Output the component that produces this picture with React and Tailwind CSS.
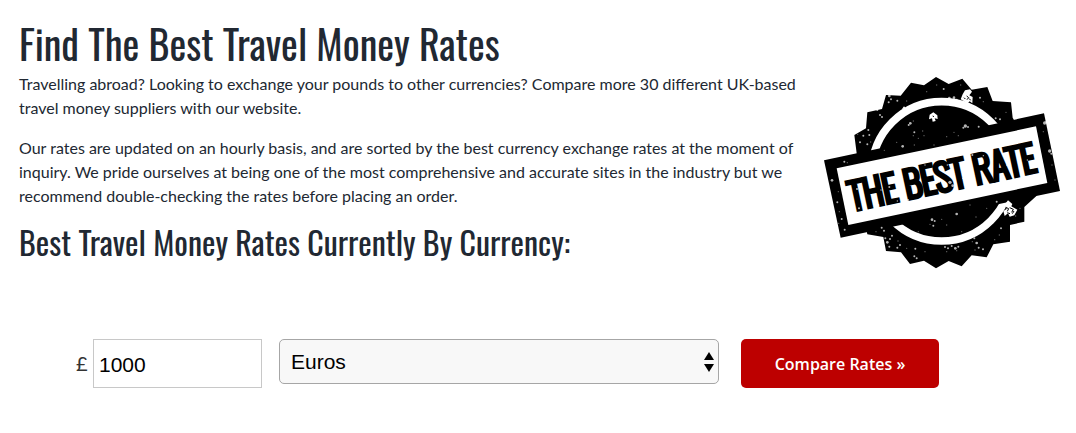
import { useState } from "react";

// white scratches on the stamp: [x, y, radius]
const specks = [
  [238, 93, 4], [243, 103, 3], [236, 112, 3], [262, 107, 3], [290, 108, 2], [202, 135, 3], [210, 150, 3], [216, 156, 3],
  [175, 195, 3], [160, 212, 3], [178, 210, 3], [150, 232, 3], [172, 238, 3], [143, 208, 2], [182, 231, 2],
  [380, 60, 2], [401, 72, 3], [350, 80, 2], [418, 99, 4], [432, 98, 4], [440, 104, 3], [452, 60, 2], [510, 98, 3], [520, 110, 2],
  [557, 160, 3], [570, 163, 3], [588, 142, 2], [301, 175, 4], [296, 180, 3], [310, 168, 2], [313, 202, 3], [338, 198, 2],
  [310, 212, 2], [325, 220, 2], [342, 212, 2], [313, 240, 2], [466, 183, 5], [474, 186, 3], [460, 188, 3], [506, 185, 3],
  [432, 202, 2], [445, 212, 2], [410, 215, 2], [372, 240, 2], [278, 244, 4], [260, 232, 2], [223, 256, 2],
  [103, 290, 3], [112, 293, 2], [66, 346, 4], [82, 412, 3], [88, 440, 2], [95, 462, 3], [86, 475, 2], [104, 494, 3],
  [85, 380, 2], [704, 174, 5], [709, 170, 3], [719, 258, 5], [724, 266, 3], [726, 300, 2], [735, 345, 2], [700, 200, 2],
  [226, 520, 3], [232, 532, 4], [240, 522, 3], [246, 512, 3], [238, 545, 3], [264, 528, 2], [262, 548, 3], [270, 540, 3],
  [222, 497, 3], [215, 488, 3], [198, 500, 2], [290, 550, 2], [316, 551, 3], [313, 574, 3], [320, 580, 3], [345, 560, 2],
  [366, 464, 4], [374, 468, 3], [360, 478, 2], [370, 482, 3], [440, 447, 4], [395, 463, 2], [410, 480, 2], [498, 456, 2],
  [405, 546, 3], [414, 550, 3], [425, 543, 3], [436, 550, 4], [445, 545, 3], [440, 557, 2], [410, 560, 2],
  [493, 520, 3], [500, 534, 4], [506, 548, 3], [487, 530, 2], [519, 553, 3], [495, 555, 2], [554, 524, 2], [573, 490, 3],
  [560, 410, 3], [480, 420, 2], [530, 430, 2], [617, 453, 2], [630, 430, 2], [568, 510, 2], [325, 500, 2], [455, 500, 2],
];

// same thing, but over the lettering
const letterSpecks = [
  [123, 330, 3], [141, 372, 3], [147, 430, 3], [213, 375, 2], [205, 420, 3], [238, 366, 3], [262, 408, 2],
  [294, 405, 3], [345, 300, 2], [365, 352, 2], [412, 300, 2], [420, 352, 5], [428, 362, 4], [388, 350, 3],
  [458, 340, 2], [487, 270, 3], [534, 356, 3], [520, 272, 2], [590, 300, 2], [652, 285, 2], [672, 330, 2],
];

function Stamp() {
  return (
    <svg viewBox="0 0 780 630" className="w-full" role="img" aria-label="The best rate">
      <polygon
        fill="#000"
        points="378,36 416,57 457,41 485,74 532,66 548,108 603,112 608,158 660,250 680,392 643,426 643,470 600,480 600,530 550,538 530,577 485,571 455,604 416,588 378,610 342,587 300,597 273,562 228,558 220,516 172,508 166,480 140,265 133,210 168,190 172,142 216,132 228,90 272,92 303,53 342,61"
      />
      <circle cx="395" cy="319" r="209" fill="none" stroke="#fff" strokeWidth="23" />
      <polygon fill="#000" points="42,286 702,145 750,378 92,518" />
      <polygon fill="#fff" points="80,310 678,184 712,354 115,480" />
      {/* worn patches */}
      <g fill="#fff">
        <path d="M452 103 L458 88 L465 76 L480 73 L486 80 L478 91 L488 96 L487 115 L479 109 L471 117 L461 108 Z" />
        <path d="M357 163 L359 149 L370 142 L382 151 L383 162 L374 160 L377 168 L368 170 L366 160 Z" />
        <path d="M586 416 L594 406 L607 417 L604 424 L622 434 L613 451 L599 455 L594 445 L584 453 L580 438 L590 432 Z" />
        <path d="M276 132 L282 124 L289 131 Z" />
        {specks.map(([x, y, r]) => (
          <circle key={`${x}-${y}`} cx={x} cy={y} r={r} opacity={r < 3 ? 0.4 : 0.7} />
        ))}
      </g>
      <path
        d="M470 93l6 5-5 6 M478 101l4 5 M462 98l4 4 M368 153l4 2 M587 427l9 4-4 8 M599 428l11 5-5 9 M592 443l8 3 M607 446l5-8"
        fill="none"
        stroke="#000"
        strokeWidth="3"
      />
      <g
        transform="translate(145 447) rotate(-12)"
        stroke="#000"
        strokeWidth="12"
        textAnchor="middle"
        className="font-[Oswald,sans-serif] text-[108px] font-extralight"
      >
        <text x="56" y="-13">THE</text>
        <text x="246" y="-13">BEST</text>
        <text x="459" y="-13">RATE</text>
      </g>
      <g fill="#fff">
        {letterSpecks.map(([x, y, r]) => (
          <circle key={`${x}-${y}`} cx={x} cy={y} r={r} opacity="0.7" />
        ))}
      </g>
    </svg>
  );
}

export default function App() {
  const [amount, setAmount] = useState("1000");
  const [currency, setCurrency] = useState("Euros");

  return (
    <div className="bg-white font-[Lato,sans-serif] text-[#212832]">
      <div className="flex items-start pl-[19px] pr-[6px] pt-[19px]">
        <div className="flex-1">
          <h1 className="font-[Oswald,sans-serif] text-[40px] leading-[48px] font-normal">
            Find The Best Travel Money Rates
          </h1>
          <p className="mt-[5px] text-base leading-6">
            Travelling abroad? Looking to exchange your pounds to other currencies? Compare more 30 different UK-based
            travel money suppliers with our website.
          </p>
          <p className="mt-4 text-base leading-6">
            Our rates are updated on an hourly basis, and are sorted by the best currency exchange rates at the moment of
            inquiry. We pride ourselves at being one of the most comprehensive and accurate sites in the industry but we
            recommend double-checking the rates before placing an order.
          </p>
          <h2 className="mt-[15px] font-[Oswald,sans-serif] text-[32px] leading-[38px] font-normal">
            Best Travel Money Rates Currently By Currency:
          </h2>
        </div>
        <div className="mt-[46px] w-[260px] shrink-0">
          <Stamp />
        </div>
      </div>

      <form className="mt-16 flex items-start pl-[76px] pr-[137px]" onSubmit={(e) => e.preventDefault()}>
        <label htmlFor="amount" className="w-[17px] text-xl leading-[49px] text-[#333]">
          £
        </label>
        <input
          id="amount"
          type="text"
          value={amount}
          onChange={(e) => setAmount(e.target.value)}
          className="h-[49px] w-[169px] border border-[#c8c8c8] bg-white px-[5px] pt-[2px] font-['Liberation_Sans',Arial,sans-serif] text-[21px] text-black"
        />
        <div className="relative ml-[17px] flex-1">
          <select
            aria-label="Currency"
            value={currency}
            onChange={(e) => setCurrency(e.target.value)}
            className="block h-[45px] w-full appearance-none rounded-[5px] border border-[#a6a6a6] bg-[#f8f8f8] pl-[11px] font-['Liberation_Sans',Arial,sans-serif] text-[21px] text-black"
          >
            <option>Euros</option>
            <option>US Dollars</option>
          </select>
          <svg viewBox="0 0 10 20" className="pointer-events-none absolute right-[5px] top-[13px] h-5 w-[10px]">
            <path d="M5 0 L10 8 H0 Z M0 12 H10 L5 20 Z" fill="#000" />
          </svg>
        </div>
        <button
          type="submit"
          className="ml-[22px] h-[49px] w-[198px] rounded-[5px] bg-[#bd0000] font-['Open_Sans',sans-serif] text-base font-semibold text-white"
        >
          Compare Rates »
        </button>
      </form>
    </div>
  );
}
